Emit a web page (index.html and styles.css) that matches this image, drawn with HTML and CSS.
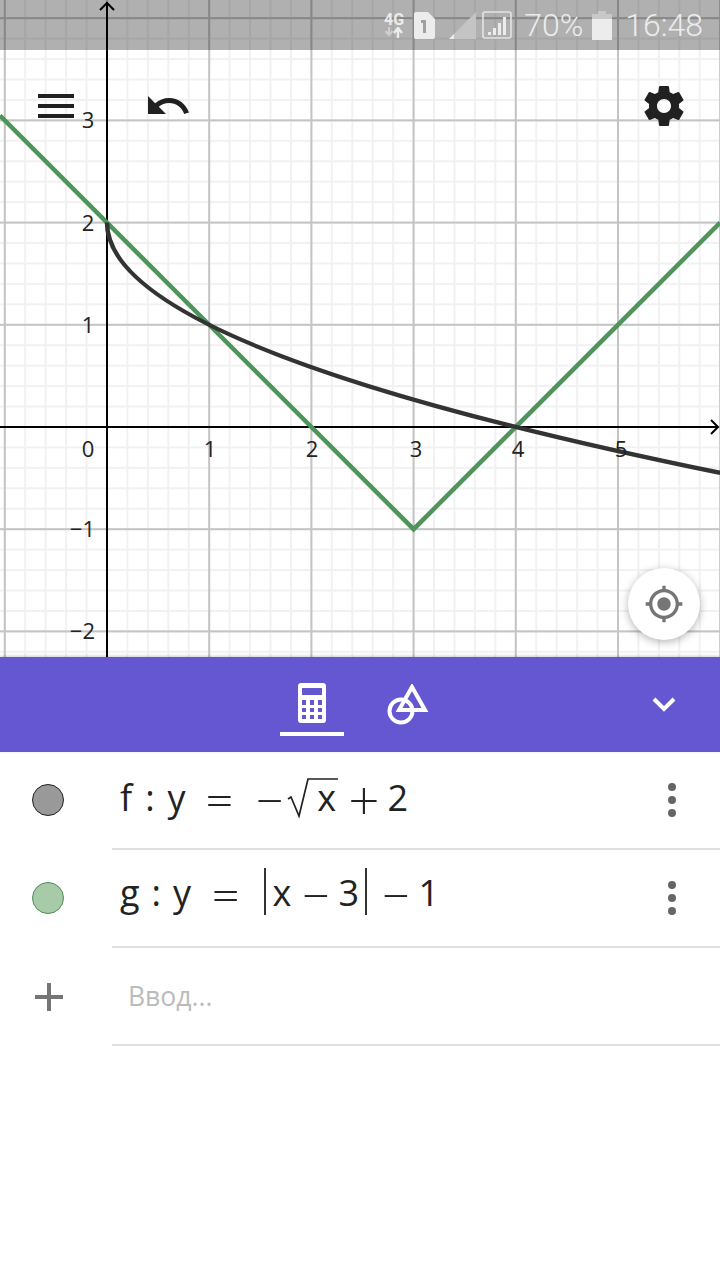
FILE: index.html
```html
<!DOCTYPE html>
<html lang="ru">
<head>
  <meta charset="UTF-8" />
  <meta name="viewport" content="width=device-width, initial-scale=1.0"/>
  <title>GeoGebra</title>
  <link rel="stylesheet" href="styles.css">
</head>
<body>
  <div class="graphics">
    <svg class="plot" width="720" height="657" viewBox="0 0 720 657">
      <defs>
        <pattern id="minor" patternUnits="userSpaceOnUse" x="106" y="426" width="20.44" height="20.44">
          <rect width="2" height="20.44" fill="#f1f1f1"/>
          <rect width="20.44" height="2" fill="#f1f1f1"/>
        </pattern>
        <pattern id="major" patternUnits="userSpaceOnUse" x="106" y="426" width="102.2" height="102.2">
          <rect width="2" height="102.2" fill="#c4c4c4"/>
          <rect width="102.2" height="2" fill="#c4c4c4"/>
        </pattern>
      </defs>
      <rect width="720" height="657" fill="url(#minor)"/>
      <rect width="720" height="657" fill="url(#major)"/>

      <!-- axes -->
      <path class="axis" d="M107 2V657M0 427H718"/>
      <path class="axis" d="M100 10L107 3L114 10M711 420L718 427L711 434"/>

      <!-- f and g -->
      <path class="curve-g" d="M0 115.6L413.6 529.2L720.2 222.6"/>
      <path class="curve-f" d="M107 222.6Q107 347.8 720.2 472.9"/>

      <!-- tick labels -->
      <g class="ticks">
        <text x="88" y="457" text-anchor="middle">0</text>
        <text x="210" y="457" text-anchor="middle">1</text>
        <text x="312" y="457" text-anchor="middle">2</text>
        <text x="416" y="457" text-anchor="middle">3</text>
        <text x="518" y="457" text-anchor="middle">4</text>
        <text x="621" y="457" text-anchor="middle">5</text>
        <text x="88" y="128" text-anchor="middle">3</text>
        <text x="88" y="231" text-anchor="middle">2</text>
        <text x="88" y="333" text-anchor="middle">1</text>
        <text x="95" y="537" text-anchor="end">−1</text>
        <text x="95" y="639" text-anchor="end">−2</text>
      </g>
    </svg>

    <div class="statusbar">
      <div class="net">
        <span class="net-label">4G</span>
        <svg width="22" height="12" viewBox="0 0 22 12">
          <path d="M6 0V7M2.5 4L6 8L9.5 4" fill="none" stroke="#cfcfcf" stroke-width="2"/>
          <path d="M15 11V3M11 6L15 1L19 6" fill="none" stroke="#ececec" stroke-width="2.4"/>
        </svg>
      </div>
      <svg class="sim" width="21" height="27" viewBox="0 0 21 27">
        <path d="M2 0H14L21 7V25Q21 27 19 27H2Q0 27 0 25V2Q0 0 2 0Z" fill="#ececec"/>
        <path d="M7 8H12V21H9V11H7Z" fill="#a0a0a0"/>
      </svg>
      <svg class="signal" width="27" height="27" viewBox="0 0 27 27">
        <path d="M27 0V27H0Z" fill="#c4c4c4"/>
        <path d="M5 22V27H0Z" fill="#ececec"/>
      </svg>
      <svg class="bars" width="30" height="28" viewBox="0 0 30 28">
        <rect x="1" y="1" width="28" height="26" rx="2" fill="none" stroke="#e4e4e4" stroke-width="1.6"/>
        <path d="M6 24V21H9V24ZM11 24V17H14V24ZM16 24V12H19V24ZM21 24V6H24V24Z" fill="#ececec"/>
      </svg>
      <span class="percent">70%</span>
      <svg class="battery" width="20" height="29" viewBox="0 0 20 29">
        <path d="M6 0H14V3H20V29H0V3H6Z" fill="#c8c8c8"/>
        <rect y="8" width="20" height="21" fill="#ececec"/>
      </svg>
      <span class="clock">16:48</span>
    </div>

    <div class="menu-btn">
      <span></span><span></span><span></span>
    </div>

    <svg class="undo-btn" width="48" height="48" viewBox="0 0 24 24">
      <path d="M12.5 8c-2.65 0-5.05.99-6.9 2.6L2 7v9h9l-3.62-3.62c1.39-1.16 3.16-1.88 5.12-1.88 3.54 0 6.55 2.31 7.6 5.5l2.37-.78C21.08 11.03 17.15 8 12.5 8z"/>
    </svg>

    <svg class="settings-btn" width="48" height="48" viewBox="0 0 24 24">
      <path d="M19.43 12.98c.04-.32.07-.64.07-.98s-.03-.66-.07-.98l2.11-1.65c.19-.15.24-.42.12-.64l-2-3.46c-.12-.22-.39-.3-.61-.22l-2.49 1c-.52-.4-1.08-.73-1.69-.98l-.38-2.65C14.46 2.18 14.25 2 14 2h-4c-.25 0-.46.18-.49.42l-.38 2.65c-.61.25-1.17.59-1.69.98l-2.49-1c-.23-.09-.49 0-.61.22l-2 3.46c-.13.22-.07.49.12.64l2.11 1.65c-.04.32-.07.65-.07.98s.03.66.07.98l-2.11 1.65c-.19.15-.24.42-.12.64l2 3.46c.12.22.39.3.61.22l2.49-1c.52.4 1.08.73 1.69.98l.38 2.65c.03.24.24.42.49.42h4c.25 0 .46-.18.49-.42l.38-2.65c.61-.25 1.17-.59 1.69-.98l2.49 1c.23.09.49 0 .61-.22l2-3.46c.12-.22.07-.49-.12-.64l-2.01-1.65zM12 15.5c-1.93 0-3.5-1.57-3.5-3.5s1.57-3.5 3.5-3.5 3.5 1.57 3.5 3.5-1.57 3.5-3.5 3.5z"/>
    </svg>

    <div class="locate-btn">
      <svg width="40" height="40" viewBox="0 0 24 24">
        <path d="M12 8c-2.21 0-4 1.79-4 4s1.79 4 4 4 4-1.79 4-4-1.79-4-4-4zm8.94 3c-.46-4.17-3.77-7.48-7.94-7.94V1h-2v2.06C6.83 3.52 3.52 6.83 3.06 11H1v2h2.06c.46 4.17 3.77 7.48 7.94 7.94V23h2v-2.06c4.17-.46 7.48-3.77 7.94-7.94H23v-2h-2.06zM12 19c-3.87 0-7-3.13-7-7s3.13-7 7-7 7 3.13 7 7-3.13 7-7 7z"/>
      </svg>
    </div>
  </div>

  <div class="tabbar">
    <div class="tab tab-active">
      <svg width="28" height="40" viewBox="0 0 28 40">
        <path fill-rule="evenodd" fill="#fff" d="M3 0H25Q28 0 28 3V37Q28 40 25 40H3Q0 40 0 37V3Q0 0 3 0ZM4 5V12H24V5ZM4 17V22H8V17ZM12 17V22H16V17ZM20 17V22H24V17ZM4 25V29H8V25ZM12 25V29H16V25ZM20 25V29H24V25ZM4 32V36H8V32ZM12 32V36H16V32ZM20 32V36H24V32Z"/>
      </svg>
    </div>
    <div class="tab">
      <svg width="42" height="42" viewBox="0 0 42 42">
        <circle cx="14" cy="27" r="11.5" fill="none" stroke="#fff" stroke-width="4"/>
        <path d="M25 3L38 26H12Z" fill="none" stroke="#fff" stroke-width="4"/>
      </svg>
    </div>
    <svg class="collapse" width="24" height="16" viewBox="0 0 24 16">
      <path d="M2 3L12 13L22 3" fill="none" stroke="#fff" stroke-width="4"/>
    </svg>
  </div>

  <div class="algebra">
    <div class="row">
      <div class="row-lead"><span class="marble marble-f"></span></div>
      <div class="row-body">
        <div class="math">
          <span>f</span>
          <span class="f-colon">:</span>
          <span class="f-y">y</span>
          <span class="op f-eq">=</span>
          <span class="op f-neg">−</span>
          <svg class="radical" width="22" height="40" viewBox="0 0 22 40">
            <path d="M0 21L3 19L11 38L20 1H50" fill="none" stroke="#222" stroke-width="1.7"/>
          </svg>
          <span class="radicand">x</span>
          <span class="op f-plus">+</span>
          <span class="f-two">2</span>
        </div>
        <div class="row-more"><span></span><span></span><span></span></div>
      </div>
    </div>

    <div class="row">
      <div class="row-lead"><span class="marble marble-g"></span></div>
      <div class="row-body">
        <div class="math">
          <span>g</span>
          <span class="g-colon">:</span>
          <span class="g-y">y</span>
          <span class="op g-eq">=</span>
          <span class="abs">
            <span>x</span>
            <span class="op abs-minus">−</span>
            <span class="abs-three">3</span>
          </span>
          <span class="op g-minus">−</span>
          <span class="g-one">1</span>
        </div>
        <div class="row-more"><span></span><span></span><span></span></div>
      </div>
    </div>

    <div class="row">
      <div class="row-lead">
        <svg class="add-icon" width="28" height="28" viewBox="0 0 28 28">
          <path d="M14 0V28M0 14H28" stroke="#757575" stroke-width="4"/>
        </svg>
      </div>
      <div class="row-body">
        <div class="placeholder">Ввод...</div>
      </div>
    </div>
  </div>
</body>
</html>
```

FILE: styles.css
```css
html, body {
  margin: 0;
  padding: 0;
}
body {
  width: 720px;
  height: 1280px;
  overflow: hidden;
  background-color: #fff;
  font-family: "Open Sans", "Liberation Sans", sans-serif;
}
.graphics {
  position: relative;
  height: 657px;
  overflow: hidden;
}
.plot {
  display: block;
}
.axis {
  fill: none;
  stroke: #000;
  stroke-width: 2;
}
.curve-f {
  fill: none;
  stroke: #333;
  stroke-width: 4.5;
}
.curve-g {
  fill: none;
  stroke: #4f945b;
  stroke-width: 4.5;
}
.ticks text {
  font-family: "Open Sans", sans-serif;
  font-size: 22px;
  fill: #222;
}

.statusbar {
  position: absolute;
  top: 0;
  left: 0;
  right: 0;
  height: 50px;
  background-color: rgba(0, 0, 0, 0.31);
  display: flex;
  align-items: center;
  justify-content: flex-end;
  padding-right: 17px;
  box-sizing: border-box;
  color: #ececec;
  font-family: Roboto, sans-serif;
  font-weight: 300;
}
.net {
  display: flex;
  flex-direction: column;
  align-items: center;
  margin-right: 9px;
}
.net svg {
  display: block;
}
.net-label {
  font-size: 16px;
  line-height: 15px;
  font-weight: 700;
  color: #ececec;
}
.sim {
  margin-right: 14px;
}
.signal {
  margin-right: 6px;
}
.bars {
  margin-right: 12px;
}
.percent {
  font-size: 32px;
  margin-right: 9px;
}
.battery {
  margin-right: 13px;
}
.clock {
  font-size: 32px;
}

.menu-btn {
  position: absolute;
  left: 38px;
  top: 94px;
  width: 36px;
  display: flex;
  flex-direction: column;
  gap: 6px;
}
.menu-btn span {
  height: 4px;
  background-color: #212121;
}
.undo-btn {
  position: absolute;
  left: 144px;
  top: 82px;
  fill: #212121;
}
.settings-btn {
  position: absolute;
  left: 640px;
  top: 82px;
  fill: #212121;
}
.locate-btn {
  position: absolute;
  left: 628px;
  top: 568px;
  width: 72px;
  height: 72px;
  border-radius: 50%;
  background-color: #fff;
  box-shadow: 0 2px 8px rgba(0, 0, 0, 0.3);
  display: flex;
  align-items: center;
  justify-content: center;
  fill: #757575;
}

.tabbar {
  position: relative;
  height: 95px;
  background-color: #6557d2;
  box-shadow: 0 -1px 3px rgba(0, 0, 0, 0.2);
  display: flex;
  justify-content: center;
  gap: 32px;
  box-sizing: border-box;
}
.tab {
  width: 64px;
  height: 79px;
  display: flex;
  align-items: center;
  justify-content: center;
  padding-top: 16px;
  box-sizing: border-box;
}
.tab-active {
  border-bottom: 4px solid #fff;
}
.collapse {
  position: absolute;
  left: 652px;
  top: 39px;
}

.row {
  display: flex;
  height: 98px;
}
.row-lead {
  width: 96px;
  margin-right: 16px;
  padding-bottom: 2px;
  box-sizing: border-box;
  flex: none;
  display: flex;
  align-items: center;
  justify-content: center;
}
.add-icon {
  margin-left: 2px;
  margin-top: 2px;
}
.row-body {
  flex: 1;
  display: flex;
  align-items: center;
  justify-content: space-between;
  border-bottom: 2px solid #e0e0e0;
  padding-left: 8px;
}
.marble {
  width: 32px;
  height: 32px;
  border-radius: 50%;
  box-sizing: border-box;
  border: 1px solid;
}
.marble-f {
  background-color: #999;
  border-color: #222;
}
.marble-g {
  background-color: #a7cba9;
  border-color: #4d8f55;
}
.row-more {
  width: 96px;
  display: flex;
  flex-direction: column;
  align-items: center;
  gap: 5px;
}
.row-more span {
  width: 8px;
  height: 8px;
  border-radius: 50%;
  background-color: #666;
}

/* formulas, spacing is per glyph like the math renderer */
.math {
  display: flex;
  align-items: baseline;
  font-family: "Open Sans", sans-serif;
  font-size: 36px;
  line-height: 36px;
  color: #222;
  padding-bottom: 13px;
}
.op {
  font-family: Lato, sans-serif;
  font-weight: 300;
  font-size: 54px;
  line-height: 36px;
  transform: translateY(8px);
}
.radical {
  overflow: visible;
  margin-left: 3px;
  transform: translateY(7px);
}
.f-colon { margin-left: 13px; }
.f-y { margin-left: 13px; }
.f-eq { margin-left: 18px; }
.f-neg { margin-left: 19px; }
.radicand { margin-left: 7px; }
.f-plus { margin-left: 12px; }
.f-two { margin-left: 8px; }

.g-colon { margin-left: 12px; }
.g-y { margin-left: 12px; }
.g-eq { margin-left: 19px; }
.abs {
  display: flex;
  align-items: baseline;
  margin-left: 23px;
  padding: 0 6px;
  border-left: 2px solid #333;
  border-right: 2px solid #333;
  line-height: 33px;
  padding-bottom: 6px;
}
.abs-minus { margin-left: 9px; }
.abs-three { margin-left: 7px; }
.g-minus { margin-left: 13px; }
.g-one { margin-left: 7px; }

.placeholder {
  font-size: 26.5px;
  color: #bbb;
  margin-left: 8px;
  font-family: "Open Sans", sans-serif;
}
```
